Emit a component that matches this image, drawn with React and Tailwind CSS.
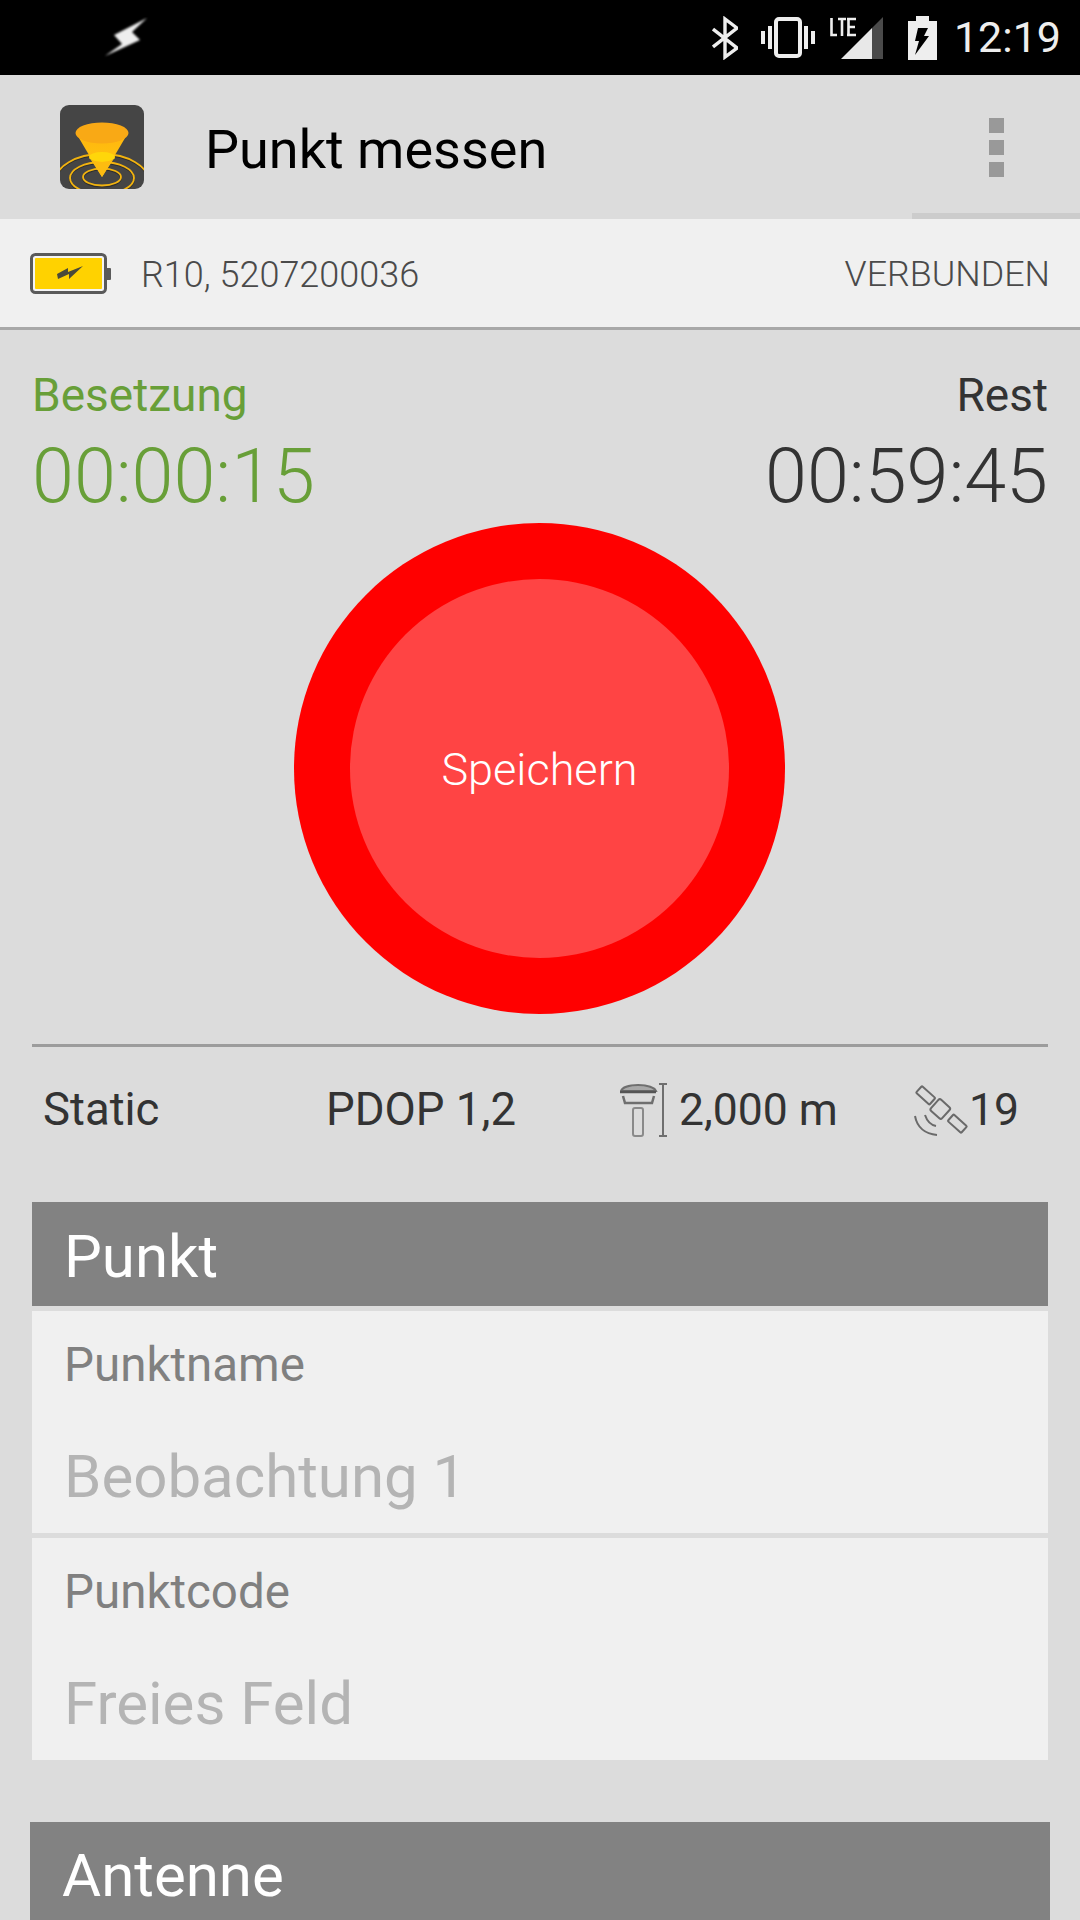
const font = { fontFamily: "Roboto, 'Liberation Sans', sans-serif" };

function Bolt() {
  return (
    <svg width="46" height="42" viewBox="0 0 46 42">
      <defs><filter id="b"><feGaussianBlur stdDeviation="0.9" /></filter></defs>
      <path d="M43 1 L10 18 L18 27 L1 39 L36 23 L28 15 Z" fill="#eeeeee" filter="url(#b)" />
    </svg>
  );
}

function Bluetooth() {
  return (
    <svg width="26" height="44" viewBox="0 0 26 44" fill="none" stroke="#eeeeee" strokeWidth="3.4">
      <path d="M1 13 L25 32 L13 41 L13 3 L25 12 L1 31" />
    </svg>
  );
}

function Vibrate() {
  return (
    <svg width="54" height="41" viewBox="0 0 54 41" fill="none">
      <rect x="15" y="2" width="24" height="37" rx="3" stroke="#eeeeee" strokeWidth="4" />
      <rect x="0" y="14" width="4" height="13" fill="#eeeeee" />
      <rect x="7" y="9" width="4" height="23" fill="#eeeeee" />
      <rect x="43" y="9" width="4" height="23" fill="#eeeeee" />
      <rect x="50" y="14" width="4" height="13" fill="#eeeeee" />
    </svg>
  );
}

function Signal() {
  return (
    <svg width="53" height="42" viewBox="0 0 53 42">
      <path d="M11 42 L42 11 L42 42 Z" fill="#e8e8e8" />
      <path d="M42 11 L53 0 L53 42 L42 42 Z" fill="#4a4a4a" />
      <path d="M1.5 1 L1.5 18 L7 18 M8 2 L16 2 M12 2 L12 19 M18.5 1 L18.5 18 M17 2 L26 2 M18 10 L25 10 M17 18 L26 18" stroke="#eeeeee" strokeWidth="2.6" fill="none" />
    </svg>
  );
}

function BatteryStatus() {
  return (
    <svg width="29" height="44" viewBox="0 0 29 44">
      <path d="M0 5 L8 5 L8 0 L21 0 L21 5 L29 5 L29 44 L0 44 Z" fill="#eeeeee" />
      <path d="M10 12 L20 12 L16 20 L21 20 L7 39 L11 25 L7 25 Z" fill="#000" />
    </svg>
  );
}

function Logo() {
  return (
    <svg width="84" height="84" viewBox="0 0 84 84">
      <defs>
        <clipPath id="lc"><rect width="84" height="84" rx="9" /></clipPath>
        <linearGradient id="cone" x1="0" y1="0" x2="0" y2="1">
          <stop offset="0" stopColor="#ffb60f" />
          <stop offset="1" stopColor="#ffc80e" />
        </linearGradient>
      </defs>
      <g clipPath="url(#lc)">
        <rect width="84" height="84" fill="#454545" />
        <g fill="none" stroke="#2e2e2e" strokeWidth="2">
          <ellipse cx="42" cy="73" rx="19" ry="8.5" />
          <ellipse cx="42" cy="74" rx="32" ry="16" />
          <ellipse cx="42" cy="78" rx="47" ry="28" />
        </g>
        <g fill="none" stroke="#f2b30f" strokeWidth="1.8">
          <ellipse cx="42" cy="72" rx="19" ry="8.5" />
          <ellipse cx="42" cy="73" rx="32" ry="16" />
          <ellipse cx="42" cy="77" rx="47" ry="28" />
        </g>
        <path d="M16 28 L42 72 L68 28 Z" fill="url(#cone)" />
        <ellipse cx="42" cy="52" rx="13" ry="5" fill="#ffd60a" />
        <path d="M29 52 A13 5 0 0 0 55 52 L42 72 Z" fill="#fdbc10" />
        <ellipse cx="42" cy="28" rx="26.5" ry="10.5" fill="#f9a915" />
      </g>
    </svg>
  );
}

function DeviceBattery() {
  return (
    <svg width="81" height="41" viewBox="0 0 81 41">
      <rect x="1.5" y="1.5" width="74" height="38" rx="4" fill="#f4f4f4" stroke="#5a5a5a" strokeWidth="3" />
      <rect x="5" y="5" width="67" height="31" rx="1" fill="#ffd200" />
      <rect x="76" y="15" width="5" height="12" rx="1" fill="#5a5a5a" />
      <path d="M27 21 L38 15 L38 19 L53 13 L39 26 L39 21 L28 26 Z" fill="#4a4a3a" />
    </svg>
  );
}

function Antenna() {
  return (
    <svg width="48" height="54" viewBox="0 0 48 54" fill="none" stroke="#6f6f6f">
      <path d="M1 8 C4 0 32 0 36 8 Z" strokeWidth="2" fill="#a8a8a8" />
      <path d="M0 9 L36 9" strokeWidth="2.5" stroke="#555555" />
      <path d="M3 13 L5 20 L32 20 L34 13" strokeWidth="2.5" />
      <rect x="13" y="25" width="10" height="28" rx="2" strokeWidth="2" stroke="#8a8a8a" />
      <path d="M43 1 L43 53 M39 1 L47 1 M39 53 L47 53" strokeWidth="2" />
    </svg>
  );
}

function Satellite() {
  return (
    <svg width="56" height="52" viewBox="0 0 56 52" fill="none" stroke="#6a6a6a" strokeWidth="2">
      <rect x="3" y="7" width="18" height="9" rx="1" transform="rotate(42 12 11)" />
      <rect x="19" y="18" width="15" height="15" rx="2" transform="rotate(42 27 25)" />
      <rect x="34" y="35" width="18" height="9" rx="1" transform="rotate(42 43 40)" />
      <path d="M11 31 C13 37 17 41 22 42" />
      <path d="M1 32 C3 43 11 50 23 51" />
    </svg>
  );
}

function Field({ label, value }) {
  return (
    <div className="h-[222px] bg-[#f0f0f0] pl-[32px] flex flex-col">
      <div className="text-[#808080] text-[47.5px] leading-[50px] mt-[29px]">{label}</div>
      <div className="text-[#b4b4b4] text-[60px] leading-[66px] mt-[54px]">{value}</div>
    </div>
  );
}

export default function App() {
  return (
    <div style={font} className="w-[1080px] h-[1920px] overflow-hidden bg-[#dcdcdc]">
      <header className="h-[75px] bg-black flex items-center">
        <div className="ml-[104px]"><Bolt /></div>
        <div className="ml-auto flex items-center">
          <Bluetooth />
          <div className="ml-[23px]"><Vibrate /></div>
          <div className="ml-[15px]"><Signal /></div>
          <div className="ml-[25px]"><BatteryStatus /></div>
          <div className="ml-[17px] mr-[19px] text-[#eeeeee] text-[43px] leading-none">12:19</div>
        </div>
      </header>

      <div className="h-[144px] bg-[#dcdcdc] flex items-center relative">
        <div className="ml-[60px]"><Logo /></div>
        <div className="ml-[61px] mt-[5px] text-black text-[54px] leading-none">Punkt messen</div>
        <div className="ml-auto mr-[76px] flex flex-col gap-[7px]">
          <div className="w-[15px] h-[15px] bg-[#999999]" />
          <div className="w-[15px] h-[15px] bg-[#999999]" />
          <div className="w-[15px] h-[15px] bg-[#999999]" />
        </div>
        <div className="absolute right-0 bottom-0 w-[168px] h-[6px] bg-[#cccccc]" />
      </div>

      <div className="h-[111px] bg-[#f0f0f0] border-b-[3px] border-[#a8a8a8] flex items-center pl-[30px] pr-[30px]">
        <DeviceBattery />
        <div className="ml-[30px] mt-[4px] text-[#4a4a4a] text-[36px] font-light">R10, 5207200036</div>
        <div className="ml-auto mt-[4px] text-[#4a4a4a] text-[35.8px] font-light">VERBUNDEN</div>
      </div>

      <main className="px-[32px]">
        <div className="flex justify-between pt-[40px]">
          <div>
            <div className="text-[#689f38] text-[46px] leading-[50px]">Besetzung</div>
            <div className="text-[#689f38] text-[75.5px] leading-[88px] font-light mt-[12px]">00:00:15</div>
          </div>
          <div className="text-right">
            <div className="text-[#333333] text-[46px] leading-[50px]">Rest</div>
            <div className="text-[#333333] text-[75.5px] leading-[88px] font-light mt-[12px]">00:59:45</div>
          </div>
        </div>

        <div className="flex justify-center mt-[3px] pr-[1px]">
          <div className="w-[491px] h-[491px] rounded-full bg-[#ff0000] flex items-center justify-center">
            <div className="w-[379px] h-[379px] rounded-full bg-[#ff4444] flex items-center justify-center pt-[2px] text-white text-[45px] font-light">Speichern</div>
          </div>
        </div>

        <div className="mt-[30px] h-[3px] bg-[#9c9c9c]" />

        <div className="h-[122px] pt-[4px] flex items-center text-[#333333] text-[44.5px]">
          <div className="ml-[11px] w-[284px] text-[45.5px]">Static</div>
          <div className="w-[293px] text-[45.5px] -ml-[1px] mr-[1px]">PDOP 1,2</div>
          <Antenna />
          <div className="ml-[11px] w-[235px]">2,000 m</div>
          <Satellite />
          <div className="-ml-[1px]">19</div>
        </div>

        <section className="mt-[33px]">
          <div className="h-[104px] bg-[#828282] pl-[32px] pt-[5px] flex items-center text-white text-[60px]">Punkt</div>
          <div className="mt-[5px]"><Field label="Punktname" value="Beobachtung 1" /></div>
          <div className="mt-[5px]"><Field label="Punktcode" value="Freies Feld" /></div>
        </section>
      </main>

      <div className="mx-[30px] mt-[62px] h-[110px] bg-[#828282] pl-[32px] pt-[24px] text-white text-[60px] leading-[60px]">Antenne</div>
    </div>
  );
}
